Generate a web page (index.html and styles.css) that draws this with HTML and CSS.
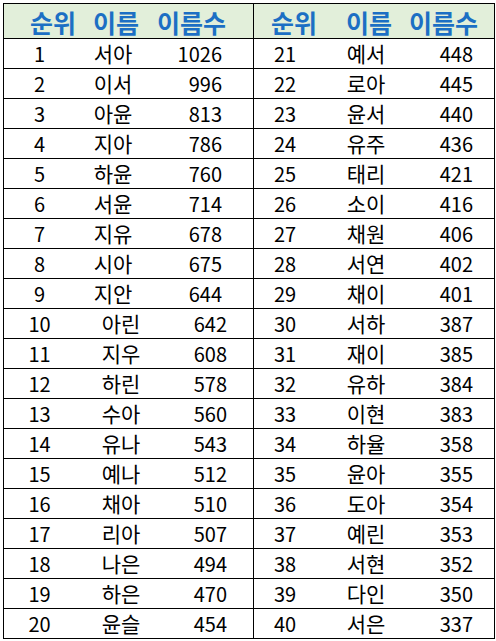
FILE: index.html
```html
<!DOCTYPE html>
<html lang="ko">
<head>
<meta charset="utf-8">
<title>이름 순위</title>
<link rel="stylesheet" href="styles.css">
</head>
<body>
<div class="sheet">
  <div class="row head">
    <div class="half left"><span>순위</span><span>이름</span><span>이름수</span></div>
    <div class="half right"><span>순위</span><span>이름</span><span>이름수</span></div>
  </div>
  <div class="row"><div class="half left"><span class="rk">1</span><span class="nm">서아</span><span class="ct">1026</span></div><div class="half right"><span class="rk">21</span><span class="nm">예서</span><span class="ct">448</span></div></div>
  <div class="row"><div class="half left"><span class="rk">2</span><span class="nm">이서</span><span class="ct">996</span></div><div class="half right"><span class="rk">22</span><span class="nm">로아</span><span class="ct">445</span></div></div>
  <div class="row"><div class="half left"><span class="rk">3</span><span class="nm">아윤</span><span class="ct">813</span></div><div class="half right"><span class="rk">23</span><span class="nm">윤서</span><span class="ct">440</span></div></div>
  <div class="row"><div class="half left"><span class="rk">4</span><span class="nm">지아</span><span class="ct">786</span></div><div class="half right"><span class="rk">24</span><span class="nm">유주</span><span class="ct">436</span></div></div>
  <div class="row"><div class="half left"><span class="rk">5</span><span class="nm">하윤</span><span class="ct">760</span></div><div class="half right"><span class="rk">25</span><span class="nm">태리</span><span class="ct">421</span></div></div>
  <div class="row"><div class="half left"><span class="rk">6</span><span class="nm">서윤</span><span class="ct">714</span></div><div class="half right"><span class="rk">26</span><span class="nm">소이</span><span class="ct">416</span></div></div>
  <div class="row"><div class="half left"><span class="rk">7</span><span class="nm">지유</span><span class="ct">678</span></div><div class="half right"><span class="rk">27</span><span class="nm">채원</span><span class="ct">406</span></div></div>
  <div class="row"><div class="half left"><span class="rk">8</span><span class="nm">시아</span><span class="ct">675</span></div><div class="half right"><span class="rk">28</span><span class="nm">서연</span><span class="ct">402</span></div></div>
  <div class="row"><div class="half left"><span class="rk">9</span><span class="nm">지안</span><span class="ct">644</span></div><div class="half right"><span class="rk">29</span><span class="nm">채이</span><span class="ct">401</span></div></div>
  <div class="row"><div class="half left wide"><span class="rk">10</span><span class="nm">아린</span><span class="ct">642</span></div><div class="half right"><span class="rk">30</span><span class="nm">서하</span><span class="ct">387</span></div></div>
  <div class="row"><div class="half left wide"><span class="rk">11</span><span class="nm">지우</span><span class="ct">608</span></div><div class="half right"><span class="rk">31</span><span class="nm">재이</span><span class="ct">385</span></div></div>
  <div class="row"><div class="half left wide"><span class="rk">12</span><span class="nm">하린</span><span class="ct">578</span></div><div class="half right"><span class="rk">32</span><span class="nm">유하</span><span class="ct">384</span></div></div>
  <div class="row"><div class="half left wide"><span class="rk">13</span><span class="nm">수아</span><span class="ct">560</span></div><div class="half right"><span class="rk">33</span><span class="nm">이현</span><span class="ct">383</span></div></div>
  <div class="row"><div class="half left wide"><span class="rk">14</span><span class="nm">유나</span><span class="ct">543</span></div><div class="half right"><span class="rk">34</span><span class="nm">하율</span><span class="ct">358</span></div></div>
  <div class="row"><div class="half left wide"><span class="rk">15</span><span class="nm">예나</span><span class="ct">512</span></div><div class="half right"><span class="rk">35</span><span class="nm">윤아</span><span class="ct">355</span></div></div>
  <div class="row"><div class="half left wide"><span class="rk">16</span><span class="nm">채아</span><span class="ct">510</span></div><div class="half right"><span class="rk">36</span><span class="nm">도아</span><span class="ct">354</span></div></div>
  <div class="row"><div class="half left wide"><span class="rk">17</span><span class="nm">리아</span><span class="ct">507</span></div><div class="half right"><span class="rk">37</span><span class="nm">예린</span><span class="ct">353</span></div></div>
  <div class="row"><div class="half left wide"><span class="rk">18</span><span class="nm">나은</span><span class="ct">494</span></div><div class="half right"><span class="rk">38</span><span class="nm">서현</span><span class="ct">352</span></div></div>
  <div class="row"><div class="half left wide"><span class="rk">19</span><span class="nm">하은</span><span class="ct">470</span></div><div class="half right"><span class="rk">39</span><span class="nm">다인</span><span class="ct">350</span></div></div>
  <div class="row"><div class="half left wide"><span class="rk">20</span><span class="nm">윤슬</span><span class="ct">454</span></div><div class="half right"><span class="rk">40</span><span class="nm">서은</span><span class="ct">337</span></div></div>
</div>
</body>
</html>
```

FILE: styles.css
```css
* { box-sizing: border-box; }

html, body {
  margin: 0;
  padding: 0;
  background: #ffffff;
}

body {
  padding: 3px 0 0 3px;
  font-family: "Noto Sans CJK KR", "Noto Sans", sans-serif;
  color: #000000;
}

.sheet {
  width: 492px;
  border: 1px solid #000000;
  border-bottom: none;
}

.row {
  display: grid;
  grid-template-columns: 250px 240px;
  height: 30px;
  border-bottom: 1px solid #000000;
}

.row.head {
  height: 35px;
  background: #e2efda;
}

.half {
  display: grid;
  align-items: center;
  font-size: 20px;
  line-height: 29px;
  white-space: nowrap;
}

.half.left {
  border-right: 1px solid #000000;
  grid-template-columns: 71px 76px 71px 1fr;
}

.half.left.wide {
  grid-template-columns: 71px 92px 60px 1fr;
}

.half.right {
  grid-template-columns: 62px 100px 57px 1fr;
}

.rk, .nm { text-align: center; }
.nm { font-size: 21px; }
.ct { text-align: right; }

.head .half {
  font-size: 25px;
  font-weight: bold;
  color: #1c6fc4;
  line-height: 32px;
  padding-top: 2px;
  text-align: left;
}

.head .half.left {
  padding-left: 26px;
  grid-template-columns: 63px 64px 1fr;
}

.head .half.right {
  padding-left: 17px;
  grid-template-columns: 75px 63px 1fr;
}
```
